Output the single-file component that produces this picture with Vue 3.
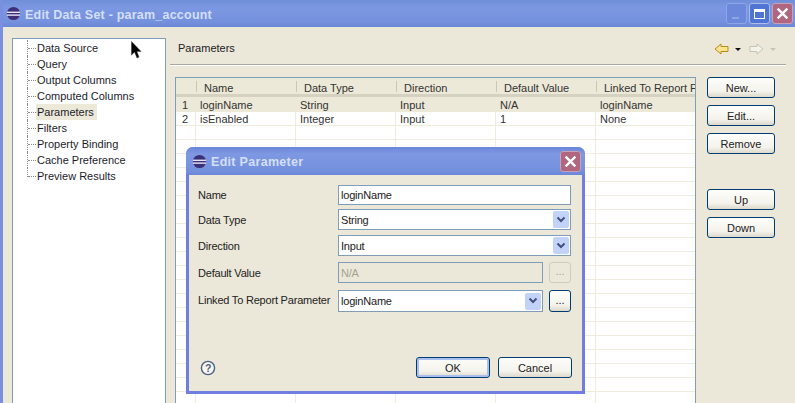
<script setup>
const tree = ['Data Source','Query','Output Columns','Computed Columns','Parameters','Filters','Property Binding','Cache Preference','Preview Results']
const cols = ['Name','Data Type','Direction','Default Value','Linked To Report P']
const rows = [
  ['1','loginName','String','Input','N/A','loginName'],
  ['2','isEnabled','Integer','Input','1','None'],
]
const blanks = Array.from({ length: 22 }, (_, i) => i)
</script>

<template>
  <div class="window">
    <header class="titlebar">
      <svg class="logo" viewBox="0 0 16 16">
        <circle cx="8" cy="8" r="7" fill="#3d2f78"/>
        <rect x="1" y="6" width="14" height="1.4" fill="#f2f0ff"/>
        <rect x="1" y="9" width="14" height="1.4" fill="#f2f0ff"/>
      </svg>
      <span class="title">Edit Data Set - param_account</span>
      <div class="winbtns">
        <span class="wb wb-min"><i></i></span>
        <span class="wb wb-max"><i></i></span>
        <span class="wb wb-close">
          <svg viewBox="0 0 12 12"><path d="M1.5 1.5L10.5 10.5M10.5 1.5L1.5 10.5" stroke="#fff" stroke-width="2.2" fill="none"/></svg>
        </span>
      </div>
    </header>

    <div class="body">
      <nav class="tree">
        <div v-for="(t, i) in tree" :key="t" class="tree-row">
          <span class="stem" :class="{ last: i === tree.length - 1 }"></span>
          <span class="tree-label" :class="{ sel: t === 'Parameters' }">{{ t }}</span>
        </div>
      </nav>

      <main class="page">
        <div class="page-head">
          <span class="page-name">Parameters</span>
          <div class="nav-arrows">
            <svg class="arrow" viewBox="0 0 15 12"><path d="M1 6L7 1V3.5H14V8.5H7V11Z" fill="#fbe58c" stroke="#b8891c"/></svg>
            <span class="caret"></span>
            <svg class="arrow" viewBox="0 0 15 12"><path d="M14 6L8 1V3.5H1V8.5H8V11Z" fill="#f4f3ea" stroke="#c4c3b6"/></svg>
            <span class="caret off"></span>
          </div>
        </div>

        <div class="content">
          <div class="table">
            <div class="thead">
              <div class="th num"></div>
              <div v-for="c in cols" :key="c" class="th">{{ c }}</div>
            </div>
            <div v-for="(r, i) in rows" :key="r[0]" class="tr" :class="{ selected: i === 0 }">
              <div v-for="(cell, j) in r" :key="j" class="td" :class="{ num: j === 0 }">{{ cell }}</div>
            </div>
            <div v-for="b in blanks" :key="b" class="tr">
              <div v-for="j in 6" :key="j" class="td" :class="{ num: j === 1 }"></div>
            </div>
          </div>

          <div class="side">
            <button class="btn">New...</button>
            <button class="btn">Edit...</button>
            <button class="btn">Remove</button>
            <button class="btn up">Up</button>
            <button class="btn">Down</button>
          </div>
        </div>
      </main>
    </div>

    <section class="dialog">
      <header class="dlg-title">
        <svg class="logo" viewBox="0 0 16 16">
          <circle cx="8" cy="8" r="7" fill="#3d2f78"/>
          <rect x="1" y="6" width="14" height="1.4" fill="#f2f0ff"/>
          <rect x="1" y="9" width="14" height="1.4" fill="#f2f0ff"/>
        </svg>
        <span class="dlg-name">Edit Parameter</span>
        <span class="wb wb-close dlg-close">
          <svg viewBox="0 0 12 12"><path d="M1.5 1.5L10.5 10.5M10.5 1.5L1.5 10.5" stroke="#fff" stroke-width="2.2" fill="none"/></svg>
        </span>
      </header>

      <div class="dlg-body">
        <div class="form">
          <label class="lbl">Name</label>
          <div class="field wide h20">loginName</div>

          <label class="lbl low">Data Type</label>
          <div class="field wide select">String
            <span class="chev"><svg viewBox="0 0 10 8"><path d="M1.5 1.5L5 5L8.5 1.5" stroke="#40507e" stroke-width="2" fill="none"/></svg></span>
          </div>

          <label class="lbl low">Direction</label>
          <div class="field wide select">Input
            <span class="chev"><svg viewBox="0 0 10 8"><path d="M1.5 1.5L5 5L8.5 1.5" stroke="#40507e" stroke-width="2" fill="none"/></svg></span>
          </div>

          <label class="lbl low">Default Value</label>
          <div class="with-btn">
            <div class="field grow disabled">N/A</div>
            <button class="mini off">...</button>
          </div>

          <label class="lbl">Linked To Report Parameter</label>
          <div class="with-btn">
            <div class="field grow select">loginName
              <span class="chev"><svg viewBox="0 0 10 8"><path d="M1.5 1.5L5 5L8.5 1.5" stroke="#40507e" stroke-width="2" fill="none"/></svg></span>
            </div>
            <button class="mini">...</button>
          </div>
        </div>

        <footer class="dlg-foot">
          <svg class="help" viewBox="0 0 16 16">
            <circle cx="8" cy="8" r="6.6" fill="#f7f6f0" stroke="#4c5f86" stroke-width="1.4"/>
            <text x="8" y="11.6" text-anchor="middle" font-size="10.5" font-weight="700" font-family="Liberation Sans, sans-serif" fill="#4c5f86">?</text>
          </svg>
          <div class="dlg-actions">
            <button class="btn ok">OK</button>
            <button class="btn cancel">Cancel</button>
          </div>
        </footer>
      </div>
    </section>

    <svg class="cursor" viewBox="0 0 11 18">
      <path d="M0.5 0.5V14L3.6 11L6 17L8 16L5.8 10.4H10Z" fill="#000" stroke="#333" stroke-width=".5"/>
    </svg>
  </div>
</template>

<style>
html, body { margin: 0; background: #ece9d8; overflow: hidden; }
</style>

<style scoped>
.window {
  position: relative;
  width: 795px;
  height: 403px;
  overflow: hidden;
  background: #ebe8d9;
  font: 11px/14px "Liberation Sans", Arial, sans-serif;
  letter-spacing: -.2px;
  color: #222;
  box-sizing: border-box;
  border-left: 3px solid #7a8fe2;
}
.titlebar {
  margin-left: -3px;
  height: 27px;
  display: flex;
  align-items: center;
  padding: 0 2px 0 6px;
  background: linear-gradient(#6f8ed9, #7d98e2 30%, #7491de 80%, #6c87d6);
}
.logo { width: 15px; height: 15px; flex: none; }
.title {
  margin-left: 4px;
  padding-top: 2px;
  font: 700 12.5px "Liberation Sans", Arial, sans-serif;
  letter-spacing: .22px;
  color: #d3dff6;
}
.winbtns { margin-left: auto; display: flex; gap: 2px; }
.wb {
  width: 21px;
  height: 21px;
  box-sizing: border-box;
  border-radius: 3px;
  display: flex;
  align-items: center;
  justify-content: center;
  border: 1px solid #8ea6e6;
}
.wb-min { background: #6c88da; }
.wb-min i { width: 7px; height: 2px; background: #8fa6e6; margin-top: 9px; margin-right: 3px; }
.wb-max { background: #4f74d6; border-color: #a9bcec; }
.wb-max i { width: 11px; height: 10px; box-sizing: border-box; border: 1px solid #fff; border-top-width: 3px; }
.wb-close { background: #b0667f; border-color: #c9a0b4; }
.wb-close svg { width: 13px; height: 13px; }

.body { display: flex; padding: 11px 9px 0 9px; }
.tree {
  width: 154px;
  height: 380px;
  flex: none;
  box-sizing: border-box;
  background: #fff;
  border: 1px solid #7f9db9;
  padding: 1px 0 0 14px;
  letter-spacing: 0;
}
.tree-row { height: 16px; display: flex; align-items: center; }
.stem {
  position: relative;
  align-self: stretch;
  width: 9px;
  flex: none;
  border-left: 1px dotted #8c8c8c;
  box-sizing: border-box;
}
.stem::after {
  content: "";
  position: absolute;
  left: 0;
  top: 8px;
  width: 8px;
  border-top: 1px dotted #8c8c8c;
}
.stem.last { align-self: flex-start; height: 9px; }
.tree-label { padding: 1px 1px; color: #1c1c2c; white-space: nowrap; }
.tree-label.sel { background: #ece9d8; padding-right: 3px; }

.page { flex: 1; margin-left: 4px; min-width: 0; }
.page-head {
  height: 27px;
  width: 616px;
  box-sizing: border-box;
  padding: 3px 0 0 8px;
  display: flex;
  align-items: flex-start;
  border-bottom: 1px solid #aca899;
  box-shadow: 0 1px 0 #fff;
}
.page-name { letter-spacing: 0; }
.nav-arrows { margin-left: auto; display: flex; align-items: center; margin-right: 10px; margin-top: 2px; }
.arrow { width: 15px; height: 12px; }
.caret { width: 0; height: 0; border: 3px solid transparent; border-top: 3px solid #111; margin: 3px 8px 0 6px; }
.caret.off { border-top-color: #c4c3b6; margin-right: 0; }

.content { display: flex; margin-top: 12px; padding-left: 5px; }
.table {
  width: 521px;
  height: 340px;
  flex: none;
  box-sizing: border-box;
  background: #fff;
  border: 1px solid #7f9db9;
  border-bottom: 0;
  overflow: hidden;
}
.thead {
  display: grid;
  grid-template-columns: 20px 100px 100px 100px 100px 100px;
  height: 19px;
  box-sizing: border-box;
  background: #ece9d8;
  border-bottom: 3px solid #d6d2c2;
}
.th {
  padding: 3px 0 0 8px;
  white-space: nowrap;
  overflow: hidden;
  color: #333;
  position: relative;
  letter-spacing: 0;
}
.th::after {
  content: "";
  position: absolute;
  left: 0;
  top: 3px;
  bottom: 2px;
  border-left: 1px solid #cbc7b8;
}
.th.num::after { display: none; }
.tr {
  display: grid;
  grid-template-columns: 20px 100px 100px 100px 100px 100px;
  height: 14px;
  box-sizing: border-box;
  border-bottom: 1px solid #efecdf;
}
.td {
  line-height: 13px;
  padding: 1px 0 0 4px;
  height: 13px;
  box-sizing: border-box;
  border-right: 1px solid #efecdf;
  white-space: nowrap;
  color: #333;
  letter-spacing: 0;
}
.td.num { padding-left: 6px; }
.td:last-child { border-right: 0; }
.tr.selected { background: #ece9d8; height: 15px; border-bottom: 0; }
.tr.selected .td { border-right-color: transparent; line-height: 14px; height: 15px; }

.side { width: 68px; margin-left: 11px; display: flex; flex-direction: column; gap: 7px; flex: none; }
.btn {
  height: 21px;
  padding: 0;
  box-sizing: border-box;
  font: inherit;
  letter-spacing: 0;
  color: #222;
  border: 1px solid #003c74;
  border-radius: 3px;
  background: linear-gradient(#fdfdfa, #f4f3ec 70%, #dcd8ca);
}
.btn.up { margin-top: 28px; }

.dialog {
  position: absolute;
  left: 183px;
  top: 147px;
  width: 399px;
  height: 247px;
  box-sizing: border-box;
  border: 3px solid #6f7ee0;
  border-top: 0;
  border-radius: 7px 7px 0 0;
  background: #ebe8d9;
  display: flex;
  flex-direction: column;
}
.dlg-title {
  height: 28px;
  flex: none;
  margin: 0 -3px;
  display: flex;
  align-items: center;
  padding: 0 4px 0 6px;
  border-radius: 7px 7px 0 0;
  background: linear-gradient(#6c84d8, #7e98e2 25%, #7490de 85%, #6d85d8);
}
.dlg-name {
  margin-left: 4px;
  padding-top: 2px;
  font: 700 12.5px "Liberation Sans", Arial, sans-serif;
  letter-spacing: .3px;
  color: #d3dff6;
}
.dlg-close { margin-left: auto; }

.dlg-body { flex: 1; display: flex; flex-direction: column; padding: 10px 10px 13px 9px; min-height: 0; }
.form {
  display: grid;
  grid-template-columns: 140px 233px;
  grid-template-rows: 24px 26px 27px 28px 22px;
  align-items: start;
}
.lbl { color: #222; white-space: nowrap; line-height: 20px; }
.lbl.low { line-height: 22px; }
.field {
  height: 21px;
  box-sizing: border-box;
  background: #fff;
  border: 1px solid #7f9db9;
  padding-left: 2px;
  line-height: 18px;
  color: #222;
  display: flex;
  align-items: center;
  justify-content: space-between;
}
.field.h20 { height: 20px; }
.with-btn { display: flex; gap: 6px; width: 233px; }
.grow { flex: 1; }
.field.disabled { background: #ebe8d9; color: #a5a390; }
.with-btn .select { height: 22px; }
.chev {
  width: 16px;
  height: 17px;
  margin-right: 1px;
  border-radius: 2px;
  background: #c3d3f8;
  display: flex;
  align-items: center;
  justify-content: center;
}
.chev svg { width: 10px; height: 8px; }
.mini {
  width: 22px;
  height: 21px;
  padding: 0 0 3px;
  box-sizing: border-box;
  font: inherit;
  color: #222;
  border: 1px solid #003c74;
  border-radius: 3px;
  background: linear-gradient(#fdfdfa, #f4f3ec 70%, #dcd8ca);
}
.with-btn .mini:not(.off) { height: 22px; }
.mini.off { border-color: #d0cdbd; color: #a5a390; background: #ebe8d9; }

.dlg-foot { margin-top: auto; display: flex; align-items: center; justify-content: space-between; }
.help { width: 16px; height: 16px; margin-left: 2px; }
.dlg-actions { display: flex; gap: 8px; }
.btn.ok, .btn.cancel { width: 74px; }
.btn.ok { box-shadow: inset 0 0 0 2px #a9c0ee; }

.cursor { position: absolute; left: 128px; top: 41px; width: 11px; height: 18px; }
</style>
